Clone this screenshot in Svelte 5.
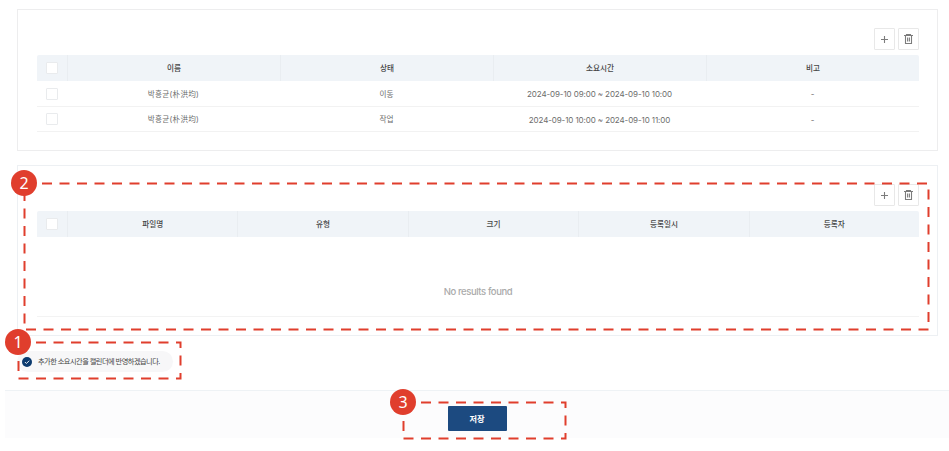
<script>
  const timeHeads = ['이름', '상태', '소요시간', '비고'];
  const timeRows = [
    ['박흥균(朴洪均)', '이동', '2024-09-10 09:00 ~ 2024-09-10 10:00', '-'],
    ['박흥균(朴洪均)', '작업', '2024-09-10 10:00 ~ 2024-09-10 11:00', '-']
  ];
  const fileHeads = ['파일명', '유형', '크기', '등록일시', '등록자'];
  const callouts = [
    { n: 2, x: 24.5, y: 183.5, w: 904, h: 146 },
    { n: 1, x: 18.5, y: 342.5, w: 162, h: 36 },
    { n: 3, x: 403.5, y: 402.5, w: 162, h: 36 }
  ];
</script>

{#snippet tools()}
  <div class="tools">
    <button aria-label="추가">
      <svg width="9" height="9" viewBox="0 0 9 9"><path d="M4.5 1v7M1 4.5h7" /></svg>
    </button>
    <button aria-label="삭제">
      <svg width="11" height="12" viewBox="0 0 11 12"><path d="M1 2.5h9M3.5 2.5v-1h4v1M2.5 2.5v8h6v-8M4.6 4.5v4M6.4 4.5v4" /></svg>
    </button>
  </div>
{/snippet}

{#snippet head(labels)}
  <div class="row head">
    <div class="check"><span class="box"></span></div>
    {#each labels as label}<div class="cell">{label}</div>{/each}
  </div>
{/snippet}

<div class="page">
  <section class="card times">
    {@render tools()}
    {@render head(timeHeads)}
    {#each timeRows as row}
      <div class="row body">
        <div class="check"><span class="box"></span></div>
        {#each row as value, i}<div class="cell" class:name={i === 0} class:date={i >= 2}>{value}</div>{/each}
      </div>
    {/each}
  </section>

  <section class="card files">
    {@render tools()}
    {@render head(fileHeads)}
    <div class="empty"><span>No results found</span></div>
  </section>

  <div class="agree">
    <svg width="10" height="10" viewBox="0 0 10 10">
      <circle cx="5" cy="5" r="5" fill="#0b3a6e" />
      <path d="M2.9 5l1.5 1.5 2.8-2.8" fill="none" stroke="#fff" stroke-width="0.9" />
    </svg>
    <span>추가한 소요시간을 캘린더에 반영하겠습니다.</span>
  </div>

  <footer><button class="save">저장</button></footer>

  <svg class="guides" width="949" height="451" viewBox="0 0 949 451">
    {#each callouts as c}
      <rect x={c.x} y={c.y} width={c.w} height={c.h} />
      <circle cx={c.x - 0.5} cy={c.y - 0.5} r="13" />
      <text x={c.x - 0.3} y={c.y + 5.3}>{c.n}</text>
    {/each}
  </svg>
</div>

<style>
  :global(body) { background: #fff; }
  .page {
    position: relative;
    box-sizing: border-box;
    width: 949px;
    height: 451px;
    padding-top: 9px;
    overflow: hidden;
    display: flex;
    flex-direction: column;
    font-family: Inter, "Noto Sans CJK KR", sans-serif;
    font-size: 7.6px;
    color: #6c6c6c;
  }
  .card {
    box-sizing: border-box;
    width: 921px;
    margin-left: 17px;
    padding: 18px 18px 0 19px;
    border: 1px solid #ededee;
    flex: none;
  }
  .times { height: 142px; }
  .files { height: 171px; margin-top: 14px; border-color: #edf0f3; }
  .tools { display: flex; justify-content: flex-end; gap: 3px; margin-bottom: 5px; }
  button { padding: 0; font: inherit; }
  .tools button {
    box-sizing: border-box;
    width: 21px;
    height: 22px;
    display: flex;
    align-items: center;
    justify-content: center;
    background: #fff;
    border: 1px solid #e8e8e8;
    border-radius: 1px;
  }
  .tools svg { flex: none; fill: none; stroke: #7c7c7c; stroke-width: 1.1; }
  .row { display: flex; box-sizing: border-box; align-items: stretch; }
  .head { height: 26px; background: #f0f4f8; border-radius: 2px 2px 0 0; color: #444; font-weight: 500; }
  .check { width: 30px; flex: none; display: flex; align-items: center; justify-content: center; }
  .box { box-sizing: border-box; width: 12px; height: 12px; background: #fff; border: 1px solid #e9ebed; border-radius: 1px; }
  .cell { flex: 1 1 0; min-width: 0; display: flex; align-items: center; justify-content: center; white-space: nowrap; }
  .head .cell { border-left: 1px solid #e9edf1; padding-bottom: 2px; }
  .body { height: 25px; border-bottom: 1px solid #f2f2f2; }
  .head + .body { height: 26px; }
  .body .cell { padding-bottom: 1px; }
  .body .name { letter-spacing: 0.25px; }
  .body .date { font-size: 8px; letter-spacing: -0.1px; padding: 1px 0 0; }
  .empty {
    box-sizing: border-box;
    height: 80px;
    padding-top: 30px;
    border-bottom: 1px solid #f3f3f3;
    display: flex;
    align-items: center;
    justify-content: center;
    font-size: 9.5px;
    font-weight: 500;
    letter-spacing: -0.42px;
    color: #aaa;
  }
  .agree {
    box-sizing: border-box;
    width: 156px;
    height: 21px;
    margin: 15px 0 0 17px;
    padding-left: 5px;
    flex: none;
    display: flex;
    align-items: center;
    gap: 6px;
    border-radius: 11px;
    background: #f7f7f8;
    font-size: 7.2px;
    letter-spacing: -0.52px;
    color: #444;
    white-space: nowrap;
  }
  .agree svg { flex: none; }
  .agree span { padding-bottom: 1px; }
  footer {
    box-sizing: border-box;
    height: 48px;
    margin: 18px 0 0 5px;
    flex: none;
    display: flex;
    justify-content: center;
    padding: 15px 0 0;
    border-top: 1px solid #eef2f5;
    background: #fcfcfd;
  }
  .save {
    width: 59px;
    height: 25px;
    padding-bottom: 2px;
    border: 0;
    border-radius: 1px;
    background: #1c4a80;
    color: #fff;
    font-size: 8.2px;
    font-weight: 600;
  }
  .guides { position: absolute; left: 0; top: 0; pointer-events: none; }
  .guides rect { fill: none; stroke: #e03e2d; stroke-width: 2; stroke-dasharray: 10 7.5; }
  .guides circle { fill: #e03e2d; }
  .guides text { fill: #fff; font-family: "Noto Sans", sans-serif; font-size: 16px; text-anchor: middle; }
</style>
